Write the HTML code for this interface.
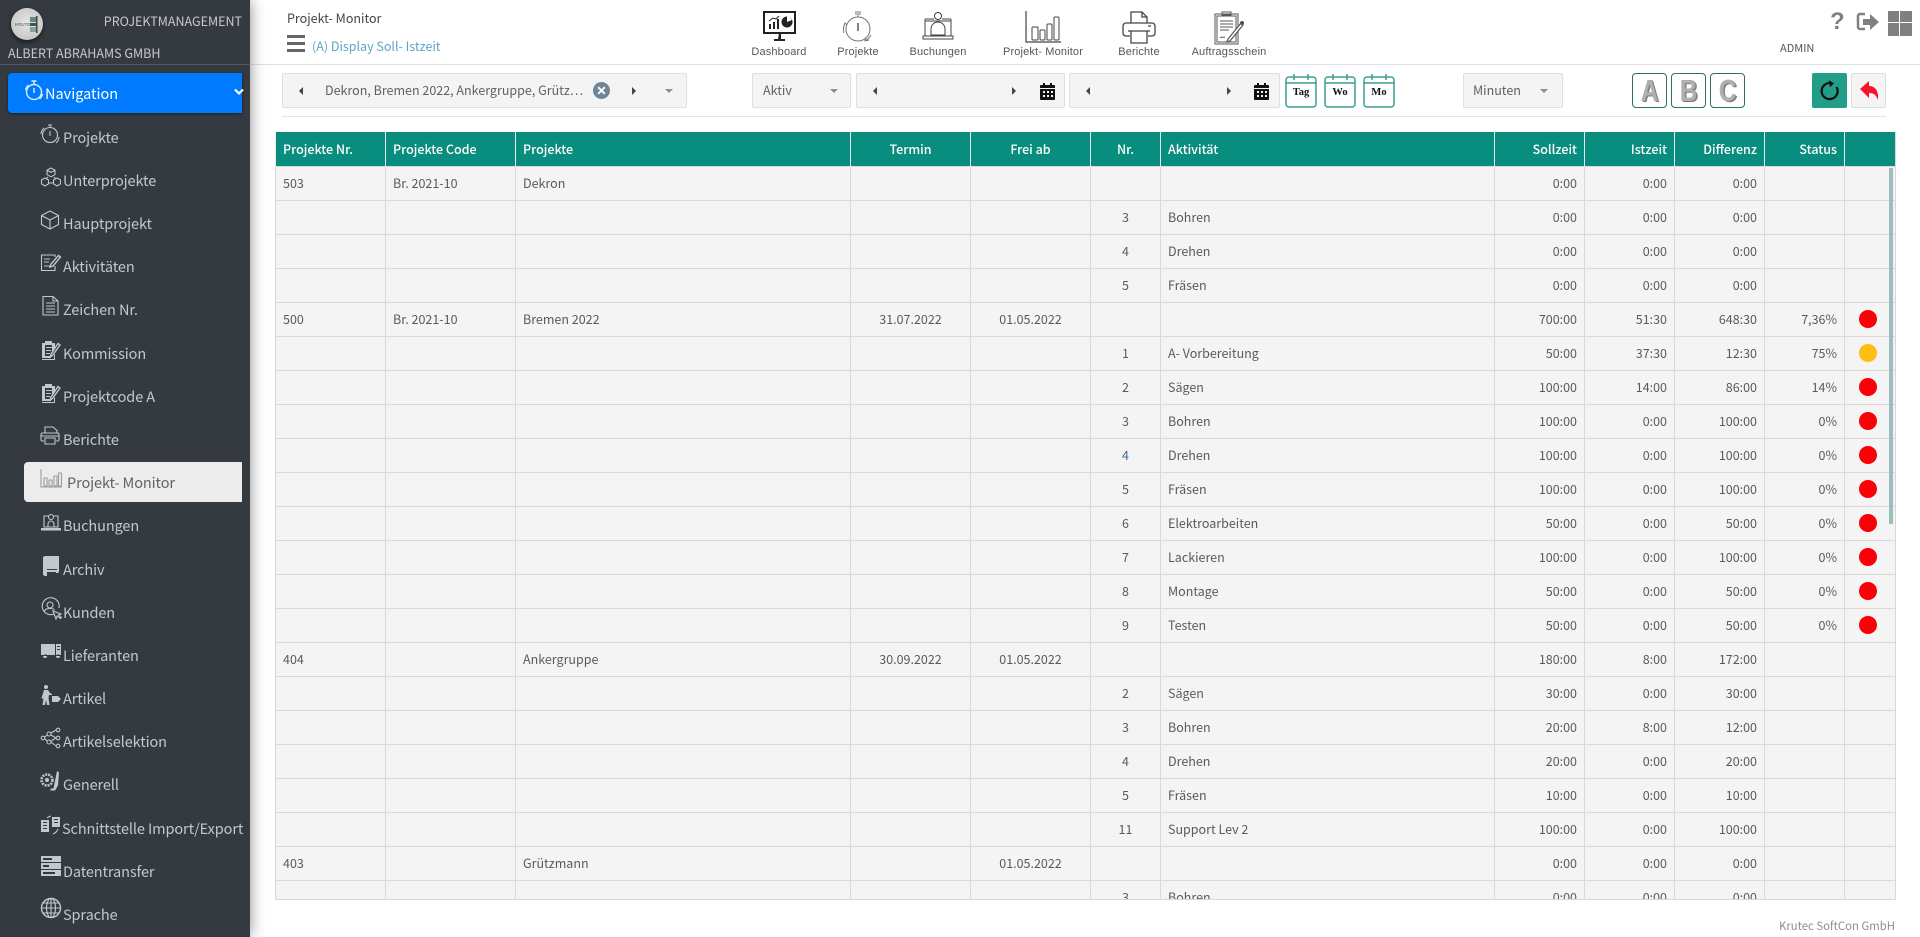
<!DOCTYPE html>
<html lang="de"><head><meta charset="utf-8"><title>Projekt- Monitor</title>
<style>
*{box-sizing:border-box}
html,body{margin:0;padding:0;width:1920px;height:937px;overflow:hidden;background:#fff;font-family:"Noto Sans CJK SC","Liberation Sans",sans-serif;color:#495057}
.abs{position:absolute}
#side{position:absolute;left:0;top:0;width:250px;height:937px;background:#343a40;box-shadow:0 0 14px rgba(0,0,0,.45);z-index:5;color:#c2c7d0}
.it{position:absolute;left:0;width:250px;height:40px;font-size:14.5px;letter-spacing:-.1px;line-height:40px;color:#c2c7d0;white-space:nowrap}
.it span{position:absolute;left:63px;top:1px}
.it svg{position:absolute;left:40px;top:5px;width:22px;height:24px;fill:none;stroke:#c2c7d0;stroke-width:1.1}
.it svg .f{fill:#c2c7d0;stroke:none}
.it svg .d{fill:#343a40;stroke:none}
.tb{position:absolute;top:10px;text-align:center;width:100px;height:54px}
.tb svg{display:block;position:absolute;left:30px;top:0;width:40px;height:36px;fill:none;stroke:#333;stroke-width:1}
.tb div{position:absolute;left:-10px;width:120px;top:35px;font:11px/14px "Liberation Sans",sans-serif;letter-spacing:.15px;color:#555}
.box{position:absolute;top:73px;height:35px;background:#f4f4f4;border:1px solid #e0e0e0;border-radius:2px;font-size:12.5px;line-height:33px;color:#5b6167}
.al{position:absolute;top:13px;width:0;height:0;border-top:4px solid transparent;border-bottom:4px solid transparent}
.l{border-right:4px solid #444}.r{border-left:4px solid #444}
.car{position:absolute;top:15px;width:0;height:0;border-left:4px solid transparent;border-right:4px solid transparent;border-top:4px solid #8a8f94}
.calb{position:absolute;top:8px;width:17px;height:18px}
.cal{position:absolute;top:73px;width:32px;height:35px}
.cal b{position:absolute;left:0;right:0;top:14px;text-align:center;font:bold 10.5px/12px "Liberation Serif",serif;color:#111}
.ab{position:absolute;top:73px;width:35px;height:35px;border:1px solid #2f6f63;border-radius:4px;background:#fff;text-align:center;overflow:hidden}
.ab span{display:block;font:bold 31px/33px "Liberation Sans",sans-serif;color:#b0b0b0;text-shadow:1px 0 0 #8a8a8a,2px 1px 0 #7a7a7a;transform:scaleX(.78)}
#tw{position:absolute;left:275px;top:132px;width:1621px;height:768px;overflow:hidden;border-bottom:1px solid #d8d8d8;border-right:1px solid #d8d8d8}
table{border-collapse:collapse;table-layout:fixed;width:1620px;font-size:12.5px}
th{background:#098d7e;color:#fff;height:34px;font-weight:500;font-size:12.5px;border-left:1px solid #e6f0ee;border-right:1px solid #e6f0ee;text-align:left;padding:0 7px;line-height:16px}
td{height:34px;background:#f4f4f4;border:1px solid #d9d9d9;padding:0 7px;line-height:16px;color:#555b61;white-space:nowrap;overflow:hidden}
.c{text-align:center}.t{text-align:right}
.dot{display:block;width:18px;height:18px;border-radius:50%;margin:0 auto 0 7px}
.rd{background:#fb0007}.yl{background:#fdbd12}
</style></head><body>

<div id="side">
 <div class="abs" style="left:11px;top:8px;width:32px;height:32px;border-radius:50%;background:radial-gradient(circle at 50% 45%,#e6e6e4,#bcbcb9);box-shadow:0 2px 5px rgba(0,0,0,.6)">
  <svg width="32" height="32" viewBox="0 0 32 32" style="position:absolute;left:0;top:0"><rect x="19" y="9" width="6" height="5" fill="#6c8582"/><rect x="19" y="15" width="6" height="3" fill="#3f5250"/><rect x="19" y="19" width="6" height="5" fill="#86a09c"/><rect x="25" y="8" width="1.500" height="17" fill="#444"/><text x="4" y="18" font-size="4.500" font-family="Liberation Sans" fill="#555">KRUTEC</text></svg>
 </div>
 <div class="abs" style="right:8px;top:12px;font-size:12.5px;line-height:18px;color:#c6cacf">PROJEKTMANAGEMENT</div>
 <div class="abs" style="left:8px;top:44px;font-size:12.5px;line-height:18px;color:#c6cacf">ALBERT ABRAHAMS GMBH</div>
 <div class="abs" style="left:0;top:64px;width:250px;height:1px;background:#4f5962"></div>

 <div class="abs" style="left:8px;top:73px;width:234px;height:40px;background:#007bff;border-radius:4px 0 0 4px;box-shadow:0 1px 3px rgba(0,0,0,.4);color:#fff;font-size:14.5px;line-height:40px">
  <svg class="abs" style="left:16px;top:5px" width="20" height="24" viewBox="0 0 20 24" fill="none" stroke="#d8ecff" stroke-width="1.4"><circle cx="10" cy="14" r="7.5"/><path d="M7.500 3h5M10 3v3M10 10v5"/><path d="M1.500 12a9 9 0 0 1 3-5M18.500 16a9 9 0 0 1-3 5"/></svg>
  <span class="abs" style="left:37px;top:1px">Navigation</span>
  <svg class="abs" style="left:226px;top:15px" width="10" height="8" viewBox="0 0 10 8" fill="none" stroke="#fff" stroke-width="2.2"><path d="M1 1.500l4 4 4-4"/></svg>
 </div>

 <div class="it" style="top:117px"><svg viewBox="0 0 22 24"><circle cx="10" cy="13" r="7.500"/><path d="M8 3h4M10 3v3M10 9v5"/><path d="M1 12a9 9 0 0 1 3-6M19 15a9 9 0 0 1-3 6"/></svg><span>Projekte</span></div>
 <div class="it" style="top:160px"><svg viewBox="0 0 22 24"><path d="M11 3l4 2.200v4.400l-4 2.200-4-2.200V5.200zM7 5.200l4 2.200 4-2.200M5 13l3.500 2v3.800L5 21l-3.500-2.200V15zM17 13l3.500 2v3.800L17 21l-3.500-2.200V15z"/><path d="M8 12l-2 2M14 12l2 2M9 18h4"/></svg><span>Unterprojekte</span></div>
 <div class="it" style="top:203px"><svg viewBox="0 0 22 24"><path d="M10 3l8.500 4.500v9L10 21l-8.500-4.500v-9zM1.500 7.500L10 12l8.500-4.500M10 12v9"/></svg><span>Hauptprojekt</span></div>
 <div class="it" style="top:246px"><svg viewBox="0 0 22 24"><path d="M15 15v4.500H1.500V4H15v2M4 8h6M4 11h5M4 15h6"/><path d="M11 13l-1 3 3-1 7.500-9-2-1.500z" stroke-width="1.400"/></svg><span>Aktivitäten</span></div>
 <div class="it" style="top:289px"><svg viewBox="0 0 22 24"><path d="M3 2.500h10l5 4.500v14H3zM13 2.500V7h5M6 9h9M6 12h9M6 15h9M6 18h9"/></svg><span>Zeichen Nr.</span></div>
 <div class="it" style="top:333px"><svg viewBox="0 0 22 24"><path class="f" d="M2 5h3V3h7v2h3v6l-3 5v-9H5v11h6v2h0H2z"/><path class="f" d="M6 9h6v1H6zM6 12h5v1H6zM6 15h4v1H6z"/><path d="M11 16l-1 3 2.500-1.500L20 7l-2-1.500z" stroke-width="1.400"/><path class="f" d="M3 21h11v-4l1-1v6H2v-1z"/></svg><span>Kommission</span></div>
 <div class="it" style="top:376px"><svg viewBox="0 0 22 24"><path class="f" d="M2 5h3V3h7v2h3v6l-3 5v-9H5v11h6v2h0H2z"/><path class="f" d="M6 9h6v1H6zM6 12h5v1H6zM6 15h4v1H6z"/><path d="M11 16l-1 3 2.500-1.500L20 7l-2-1.500z" stroke-width="1.400"/><path class="f" d="M3 21h11v-4l1-1v6H2v-1z"/></svg><span>Projektcode A</span></div>
 <div class="it" style="top:419px"><svg viewBox="0 0 22 24"><path d="M5 9V3h8l4 3.500V9M4 17H2.500A1.500 1.500 0 0 1 1 15.500v-5A1.500 1.500 0 0 1 2.500 9h15a1.500 1.500 0 0 1 1.500 1.500v5a1.500 1.500 0 0 1-1.500 1.500H16M5 14h10v6H5zM1 12h18"/></svg><span>Berichte</span></div>

 <div class="abs" style="left:24px;top:462px;width:218px;height:40px;background:#ececec;border-radius:4px 0 0 4px"></div>
 <div class="it" style="top:462px;color:#5e6368"><svg viewBox="0 0 22 24" style="stroke:#9a9ea2"><path d="M1 2v18h21M4 11h3v8H4zM9 13h3v6H9zM14 9h3v10h-3zM18.500 6h3v13h-3z"/></svg><span style="left:67px">Projekt- Monitor</span></div>

 <div class="it" style="top:505px"><svg viewBox="0 0 22 24"><path d="M4 6h14v11H4zM8 17v-3a3 3 0 0 1 6 0v3"/><circle cx="11" cy="7" r="2.500" fill="#343a40"/><path class="f" d="M1 18h20v2.500H1z"/></svg><span>Buchungen</span></div>
 <div class="it" style="top:549px"><svg viewBox="0 0 22 24"><path class="f" d="M5 2h14v16l-1 1H7v3H5zM3 3l2-1v20l-2-1z"/><path class="d" d="M7 15h10v1H7zM7 18h9v1H7z"/></svg><span>Archiv</span></div>
 <div class="it" style="top:592px"><svg viewBox="0 0 22 24"><path d="M14 17a8.500 8.500 0 1 1 5-6"/><circle cx="10" cy="8" r="3"/><path d="M4 15c1-3 3-3.500 6-3.500s4 .5 4.500 1.500"/><path d="M13 14l3 8 1.200-3 3.300 2.500 1-1-3-2.500 2.500-1z"/></svg><span>Kunden</span></div>
 <div class="it" style="top:635px"><svg viewBox="0 0 22 24"><path class="f" d="M1 4h14v11H7a2 2 0 0 0-3 0H1zM16 4h5v11h-1a2 2 0 0 0-3 0h-1zM3 16a2 2 0 1 0 4 0zM16 16a2 2 0 1 0 4 0z"/><path class="d" d="M17 6h3v1h-3zM17 9h3v1h-3z"/></svg><span>Lieferanten</span></div>
 <div class="it" style="top:678px"><svg viewBox="0 0 22 24"><circle class="f" cx="6" cy="4" r="2"/><path class="f" d="M4 7h4l2 3 2 1v1H9l-.5 3 1 7H7l-1-5-1 5H2.500l1-7-1 1-1-1z"/><path class="f" d="M12 13h6l3 3-3 3h-6z"/></svg><span>Artikel</span></div>
 <div class="it" style="top:721px"><svg viewBox="0 0 22 24"><circle cx="3" cy="12" r="1.800"/><circle cx="9" cy="8" r="2"/><circle cx="9" cy="16" r="2"/><circle cx="18" cy="4" r="1.800"/><circle cx="18" cy="12" r="1.800"/><circle cx="18" cy="20" r="1.800"/><path d="M5 11l2-2M5 13l2 2M11 7l5-3M11 9l5 3M11 16l5 4M11 15l5-3"/></svg><span>Artikelselektion</span></div>
 <div class="it" style="top:764px"><svg viewBox="0 0 22 24"><circle cx="7" cy="11" r="5.500" stroke-width="2.500" stroke-dasharray="2 1"/><circle class="f" cx="7" cy="11" r="2"/><path class="f" d="M17 2l2 1.500-1 13-3 5h-5l1-2h2.500z"/></svg><span>Generell</span></div>
 <div class="it" style="top:808px"><svg viewBox="0 0 22 24" style="left:40px"><path class="f" d="M1 7h8v12H1zM12 4h8v10h-8z"/><path class="d" d="M3 9h4v1H3zM3 12h4v1H3zM3 15h4v1H3zM14 6h4v1h-4zM14 9h4v1h-4z"/><path d="M7 5a9 9 0 0 1 4-2M13 21a9 9 0 0 0 5-5"/></svg><span style="left:62px">Schnittstelle Import/Export</span></div>
 <div class="it" style="top:851px"><svg viewBox="0 0 22 24" style="top:3px"><path class="f" d="M1 2h20v6H1zM1 9h20v6H1zM1 16h20v6H1z"/><path class="d" d="M3 4h9v2H3zM3 11h6v2H3zM3 18h12v2H3z"/></svg><span>Datentransfer</span></div>
 <div class="it" style="top:894px"><svg viewBox="0 0 22 24" style="top:3px"><circle cx="11" cy="11" r="9.500" stroke-width="1.400"/><ellipse cx="11" cy="11" rx="4.500" ry="9.500"/><path d="M11 1.500v19M1.500 11h19M3 6h16M3 16h16"/></svg><span>Sprache</span></div>
</div>

<!-- header -->
<div class="abs" style="left:250px;top:64px;width:1670px;height:1px;background:#dee2e6"></div>
<div class="abs" style="left:287px;top:9px;font-size:12.5px;line-height:18px;color:#444">Projekt- Monitor</div>
<div class="abs" style="left:287px;top:35px;width:18px;height:3px;background:#666"></div>
<div class="abs" style="left:287px;top:42px;width:18px;height:3px;background:#666"></div>
<div class="abs" style="left:287px;top:49px;width:18px;height:3px;background:#666"></div>
<div class="abs" style="left:312px;top:37px;font-size:12.5px;line-height:18px;color:#5fa5c4">(A) Display Soll- Istzeit</div>

<div class="tb" style="left:729px"><svg viewBox="0 0 40 36"><rect x="5" y="2" width="31" height="21" fill="#fff" stroke="#222" stroke-width="2"/><path d="M20 23h2v6h4v2H15v-2h4z" fill="#222" stroke="none"/><path d="M10 19v-5h2v5zM14 19v-7h2v7zM18 19V9h2v10z" fill="#222" stroke="none"/><path d="M10 11l4-3 3 1 3-3" stroke="#222"/><circle cx="28" cy="12" r="5.500" fill="#222" stroke="none"/><path d="M28 12V6h2l3 4z" fill="#fff" stroke="none"/></svg><div>Dashboard</div></div>
<div class="tb" style="left:808px"><svg viewBox="0 0 40 36" style="stroke:#777"><circle cx="20" cy="19" r="12"/><path d="M17 2h6M17 4h6M20 5v2"/><path d="M20 13v8" stroke-width="1.800"/><path d="M7 13a14 14 0 0 0-1 10M33 25a14 14 0 0 1-6 6M6 15l1-2 2 2M31 30l-4 1 1-4" /></svg><div>Projekte</div></div>
<div class="tb" style="left:888px"><svg viewBox="0 0 40 36" style="stroke:#444"><path d="M7 9h9M24 9h9M7 9v17M33 9v17M5 26v3h30v-3zM10 29h20"/><circle cx="20" cy="6" r="3.500"/><path d="M13 25v-6a7 7 0 0 1 14 0v6zM7 11h26"/></svg><div>Buchungen</div></div>
<div class="tb" style="left:993px"><svg viewBox="0 0 40 36" style="stroke:#444"><path d="M3 1v31h35" stroke-width="1.200"/><rect x="9" y="17" width="6" height="13" rx="1"/><rect x="17" y="20" width="5" height="10" rx="1"/><rect x="24" y="14" width="5" height="16" rx="1"/><rect x="31" y="7" width="5" height="23" rx="1"/></svg><div>Projekt- Monitor</div></div>
<div class="tb" style="left:1089px"><svg viewBox="0 0 40 36" style="stroke:#444;stroke-width:1.300"><path d="M12 13V2h11l5 5v6M23 2v5h5"/><path d="M11 26H7a3 3 0 0 1-3-3V16a3 3 0 0 1 3-3h26a3 3 0 0 1 3 3v7a3 3 0 0 1-3 3h-4"/><path d="M9 21h22M12 21v12h16V21M29 16h3"/></svg><div>Berichte</div></div>
<div class="tb" style="left:1179px"><svg viewBox="0 0 40 36" style="stroke:#555"><rect x="6" y="4" width="23" height="30"/><rect x="8" y="6" width="19" height="26"/><path d="M13 4V2h9v3h-9zM11 11h13M11 14h13M11 17h13M11 20h9M11 28c2-2 3 0 5-1"/><path d="M19 29l-1 3 3-1 13-16-2-2z" fill="#fff" stroke-width="1.200"/><circle cx="33" cy="13" r="1.500" fill="#444"/></svg><div>Auftragsschein</div></div>

<div class="abs" style="left:1830px;top:9px;font:bold 24px/26px 'Liberation Sans',sans-serif;color:#808080">?</div>
<svg class="abs" style="left:1856px;top:11px" width="24" height="22" viewBox="0 0 24 22"><path d="M9 3H4a2 2 0 0 0-2 2v11a2 2 0 0 0 2 2h5" fill="none" stroke="#808080" stroke-width="2.500"/><path d="M7 8h7V3l9 8-9 8v-5H7z" fill="#808080"/></svg>
<div class="abs" style="left:1888px;top:11px;width:11px;height:11px;background:#808080"></div>
<div class="abs" style="left:1900px;top:11px;width:12px;height:11px;background:#808080"></div>
<div class="abs" style="left:1888px;top:23px;width:11px;height:13px;background:#808080"></div>
<div class="abs" style="left:1900px;top:23px;width:12px;height:13px;background:#808080"></div>
<div class="abs" style="left:1780px;top:40px;font-size:11px;line-height:16px;color:#555">ADMIN</div>

<!-- filters -->
<div class="box" style="left:282px;width:405px">
 <i class="al l" style="left:16px"></i>
 <span class="abs" style="left:42px;top:-1px;white-space:nowrap">Dekron, Bremen 2022, Ankergruppe, Grütz…</span>
 <svg class="abs" style="left:310px;top:8px" width="17" height="17" viewBox="0 0 17 17"><circle cx="8.500" cy="8.500" r="8.500" fill="#6f8595"/><path d="M5.200 5.200l6.600 6.600M11.800 5.200l-6.600 6.600" stroke="#fff" stroke-width="2"/></svg>
 <i class="al r" style="left:349px"></i>
 <i class="car" style="left:382px"></i>
</div>
<div class="box" style="left:752px;width:99px"><span class="abs" style="left:10px;top:-1px">Aktiv</span><i class="car" style="left:77px"></i></div>
<div class="box" style="left:856px;width:209px">
 <i class="al l" style="left:16px"></i><i class="al r" style="left:155px"></i>
 <svg class="calb" style="left:182px" viewBox="0 0 17 18"><path d="M1 4a1 1 0 0 1 1-1h2V1h2v2h5V1h2v2h2a1 1 0 0 1 1 1v2H1zM1 7h15v10a1 1 0 0 1-1 1H2a1 1 0 0 1-1-1z" fill="#111"/><path d="M4 9h2v2H4zM8 9h2v2H8zM12 9h2v2h-2zM4 13h2v2H4zM8 13h2v2H8zM12 13h2v2h-2z" fill="#f4f4f4"/></svg>
</div>
<div class="box" style="left:1069px;width:211px">
 <i class="al l" style="left:16px"></i><i class="al r" style="left:157px"></i>
 <svg class="calb" style="left:183px" viewBox="0 0 17 18"><path d="M1 4a1 1 0 0 1 1-1h2V1h2v2h5V1h2v2h2a1 1 0 0 1 1 1v2H1zM1 7h15v10a1 1 0 0 1-1 1H2a1 1 0 0 1-1-1z" fill="#111"/><path d="M4 9h2v2H4zM8 9h2v2H8zM12 9h2v2h-2zM4 13h2v2H4zM8 13h2v2H8zM12 13h2v2h-2z" fill="#f4f4f4"/></svg>
</div>
<div class="cal" style="left:1285px"><svg class="abs" style="left:0;top:0" width="32" height="35" viewBox="0 0 32 35" fill="none" stroke="#3d9e8f" stroke-width="1.500"><rect x="1" y="4" width="30" height="30" rx="3"/><path d="M1 10h30M9 1v6M23 1v6"/></svg><b>Tag</b></div>
<div class="cal" style="left:1324px"><svg class="abs" style="left:0;top:0" width="32" height="35" viewBox="0 0 32 35" fill="none" stroke="#3d9e8f" stroke-width="1.500"><rect x="1" y="4" width="30" height="30" rx="3"/><path d="M1 10h30M9 1v6M23 1v6"/></svg><b>Wo</b></div>
<div class="cal" style="left:1363px"><svg class="abs" style="left:0;top:0" width="32" height="35" viewBox="0 0 32 35" fill="none" stroke="#3d9e8f" stroke-width="1.500"><rect x="1" y="4" width="30" height="30" rx="3"/><path d="M1 10h30M9 1v6M23 1v6"/></svg><b>Mo</b></div>
<div class="box" style="left:1463px;width:100px"><span class="abs" style="left:9px;top:-1px">Minuten</span><i class="car" style="left:76px"></i></div>
<div class="ab" style="left:1632px"><span>A</span></div>
<div class="ab" style="left:1671px"><span>B</span></div>
<div class="ab" style="left:1710px"><span>C</span></div>
<div class="abs" style="left:1812px;top:73px;width:35px;height:35px;background:#229d87;border-radius:2px"><svg width="35" height="35" viewBox="0 0 35 35" fill="none" stroke="#111" stroke-width="2.200"><path d="M24.500 14a8 8 0 1 1-5.500-3.800"/><path d="M17 8l4 2.500-3 3" stroke-width="1.200" fill="#111"/></svg></div>
<div class="abs" style="left:1851px;top:73px;width:35px;height:35px;background:#f4f4f4;border:1px solid #ddd;border-radius:2px"><svg width="33" height="33" viewBox="0 0 33 33"><path d="M8 15l9-8v5c6 0 10 5 9 14-2-5-4-7-9-7v5z" fill="#f8132a"/></svg></div>
<div class="abs" style="left:282px;top:116px;width:1604px;height:1px;background:#e2e5e8"></div>

<!-- table -->
<div id="tw">
<table>
<colgroup><col style="width:110px"><col style="width:130px"><col style="width:335px"><col style="width:120px"><col style="width:120px"><col style="width:70px"><col style="width:334px"><col style="width:90px"><col style="width:90px"><col style="width:90px"><col style="width:80px"><col style="width:51px"></colgroup>
<tr><th>Projekte Nr.</th><th>Projekte Code</th><th>Projekte</th><th class="c">Termin</th><th class="c">Frei ab</th><th class="c">Nr.</th><th>Aktivität</th><th class="t">Sollzeit</th><th class="t">Istzeit</th><th class="t">Differenz</th><th class="t">Status</th><th></th></tr>
<tr><td>503</td><td>Br. 2021-10</td><td>Dekron</td><td></td><td></td><td></td><td></td><td class="t">0:00</td><td class="t">0:00</td><td class="t">0:00</td><td></td><td></td></tr>
<tr><td></td><td></td><td></td><td></td><td></td><td class="c">3</td><td>Bohren</td><td class="t">0:00</td><td class="t">0:00</td><td class="t">0:00</td><td></td><td></td></tr>
<tr><td></td><td></td><td></td><td></td><td></td><td class="c">4</td><td>Drehen</td><td class="t">0:00</td><td class="t">0:00</td><td class="t">0:00</td><td></td><td></td></tr>
<tr><td></td><td></td><td></td><td></td><td></td><td class="c">5</td><td>Fräsen</td><td class="t">0:00</td><td class="t">0:00</td><td class="t">0:00</td><td></td><td></td></tr>
<tr><td>500</td><td>Br. 2021-10</td><td>Bremen 2022</td><td class="c">31.07.2022</td><td class="c">01.05.2022</td><td></td><td></td><td class="t">700:00</td><td class="t">51:30</td><td class="t">648:30</td><td class="t">7,36%</td><td><i class="dot rd"></i></td></tr>
<tr><td></td><td></td><td></td><td></td><td></td><td class="c">1</td><td>A- Vorbereitung</td><td class="t">50:00</td><td class="t">37:30</td><td class="t">12:30</td><td class="t">75%</td><td><i class="dot yl"></i></td></tr>
<tr><td></td><td></td><td></td><td></td><td></td><td class="c">2</td><td>Sägen</td><td class="t">100:00</td><td class="t">14:00</td><td class="t">86:00</td><td class="t">14%</td><td><i class="dot rd"></i></td></tr>
<tr><td></td><td></td><td></td><td></td><td></td><td class="c">3</td><td>Bohren</td><td class="t">100:00</td><td class="t">0:00</td><td class="t">100:00</td><td class="t">0%</td><td><i class="dot rd"></i></td></tr>
<tr><td></td><td></td><td></td><td></td><td></td><td class="c" style="color:#44688a">4</td><td>Drehen</td><td class="t">100:00</td><td class="t">0:00</td><td class="t">100:00</td><td class="t">0%</td><td><i class="dot rd"></i></td></tr>
<tr><td></td><td></td><td></td><td></td><td></td><td class="c">5</td><td>Fräsen</td><td class="t">100:00</td><td class="t">0:00</td><td class="t">100:00</td><td class="t">0%</td><td><i class="dot rd"></i></td></tr>
<tr><td></td><td></td><td></td><td></td><td></td><td class="c">6</td><td>Elektroarbeiten</td><td class="t">50:00</td><td class="t">0:00</td><td class="t">50:00</td><td class="t">0%</td><td><i class="dot rd"></i></td></tr>
<tr><td></td><td></td><td></td><td></td><td></td><td class="c">7</td><td>Lackieren</td><td class="t">100:00</td><td class="t">0:00</td><td class="t">100:00</td><td class="t">0%</td><td><i class="dot rd"></i></td></tr>
<tr><td></td><td></td><td></td><td></td><td></td><td class="c">8</td><td>Montage</td><td class="t">50:00</td><td class="t">0:00</td><td class="t">50:00</td><td class="t">0%</td><td><i class="dot rd"></i></td></tr>
<tr><td></td><td></td><td></td><td></td><td></td><td class="c">9</td><td>Testen</td><td class="t">50:00</td><td class="t">0:00</td><td class="t">50:00</td><td class="t">0%</td><td><i class="dot rd"></i></td></tr>
<tr><td>404</td><td></td><td>Ankergruppe</td><td class="c">30.09.2022</td><td class="c">01.05.2022</td><td></td><td></td><td class="t">180:00</td><td class="t">8:00</td><td class="t">172:00</td><td></td><td></td></tr>
<tr><td></td><td></td><td></td><td></td><td></td><td class="c">2</td><td>Sägen</td><td class="t">30:00</td><td class="t">0:00</td><td class="t">30:00</td><td></td><td></td></tr>
<tr><td></td><td></td><td></td><td></td><td></td><td class="c">3</td><td>Bohren</td><td class="t">20:00</td><td class="t">8:00</td><td class="t">12:00</td><td></td><td></td></tr>
<tr><td></td><td></td><td></td><td></td><td></td><td class="c">4</td><td>Drehen</td><td class="t">20:00</td><td class="t">0:00</td><td class="t">20:00</td><td></td><td></td></tr>
<tr><td></td><td></td><td></td><td></td><td></td><td class="c">5</td><td>Fräsen</td><td class="t">10:00</td><td class="t">0:00</td><td class="t">10:00</td><td></td><td></td></tr>
<tr><td></td><td></td><td></td><td></td><td></td><td class="c">11</td><td>Support Lev 2</td><td class="t">100:00</td><td class="t">0:00</td><td class="t">100:00</td><td></td><td></td></tr>
<tr><td>403</td><td></td><td>Grützmann</td><td></td><td class="c">01.05.2022</td><td></td><td></td><td class="t">0:00</td><td class="t">0:00</td><td class="t">0:00</td><td></td><td></td></tr>
<tr><td></td><td></td><td></td><td></td><td></td><td class="c">3</td><td>Bohren</td><td class="t">0:00</td><td class="t">0:00</td><td class="t">0:00</td><td></td><td></td></tr>
</table>
<div class="abs" style="left:1614px;top:36px;width:4px;height:356px;background:#9bbfbd"></div>
</div>
<div class="abs" style="right:25px;top:917px;font-size:11.3px;letter-spacing:.02px;line-height:18px;color:#8a8f94;white-space:nowrap">Krutec SoftCon GmbH</div>
</body></html>
